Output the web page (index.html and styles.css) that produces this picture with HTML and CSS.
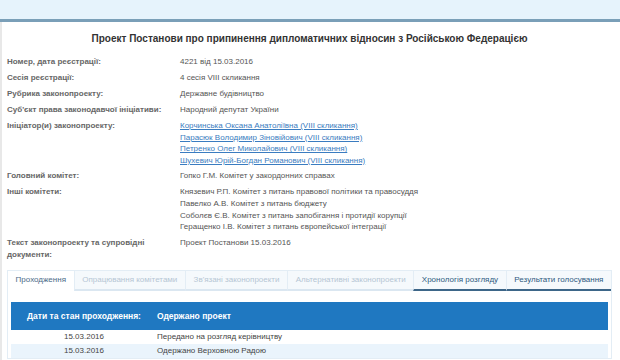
FILE: index.html
```html
<!DOCTYPE html>
<html lang="uk">
  <head>
    <meta charset="UTF-8" />
    <title>Проект Постанови</title>
    <link rel="stylesheet" href="styles.css">
  </head>
  <body>
    <div class="topbar"></div>
    <div class="page">
      <h1>Проект Постанови про припинення дипломатичних відносин з Російською Федерацією</h1>

      <div class="info">
        <div class="label">Номер, дата реєстрації:</div>
        <div class="value">4221 від 15.03.2016</div>

        <div class="label">Сесія реєстрації:</div>
        <div class="value">4 сесія VIII скликання</div>

        <div class="label">Рубрика законопроекту:</div>
        <div class="value">Державне будівництво</div>

        <div class="label">Суб'єкт права законодавчої ініціативи:</div>
        <div class="value">Народний депутат України</div>

        <div class="label">Ініціатор(и) законопроекту:</div>
        <div class="value lines">
          <a href="#">Корчинська Оксана Анатоліївна (VIII скликання)</a>
          <a href="#">Парасюк Володимир Зіновійович (VIII скликання)</a>
          <a href="#">Петренко Олег Миколайович (VIII скликання)</a>
          <a href="#">Шухевич Юрій-Богдан Романович (VIII скликання)</a>
        </div>

        <div class="label">Головний комітет:</div>
        <div class="value">Гопко Г.М. Комітет у закордонних справах</div>

        <div class="label">Інші комітети:</div>
        <div class="value lines">
          <span>Князевич Р.П. Комітет з питань правової політики та правосуддя</span>
          <span>Павелко А.В. Комітет з питань бюджету</span>
          <span>Соболєв Є.В. Комітет з питань запобігання і протидії корупції</span>
          <span>Геращенко І.В. Комітет з питань європейської інтеграції</span>
        </div>

        <div class="label">Текст законопроекту та супровідні документи:</div>
        <div class="value">Проект Постанови 15.03.2016</div>
      </div>

      <div class="tabs">
        <div class="tab active">Проходження</div>
        <div class="tab">Опрацювання комітетами</div>
        <div class="tab">Зв'язані законопроекти</div>
        <div class="tab">Альтернативні законопроекти</div>
        <div class="tab enabled">Хронологія розгляду</div>
        <div class="tab enabled">Результати голосування</div>
      </div>

      <div class="panel">
        <table class="flow">
          <thead>
            <tr>
              <th class="date-col">Дати та стан проходження:</th>
              <th>Одержано проект</th>
            </tr>
          </thead>
          <tbody>
            <tr>
              <td class="date-col">15.03.2016</td>
              <td>Передано на розгляд керівництву</td>
            </tr>
            <tr class="alt">
              <td class="date-col">15.03.2016</td>
              <td>Одержано Верховною Радою</td>
            </tr>
          </tbody>
        </table>
      </div>
    </div>
  </body>
</html>
```

FILE: styles.css
```css
body {
  font-family: "Liberation Sans", Arial, sans-serif;
  margin: 0;
  background: #ffffff;
  color: #444;
  font-size: 8px;
}
.topbar {
  height: 19px;
  background: #e6f3fc;
  border-bottom: 3px solid #7a9fb8;
}
.page {
  border-left: 2px solid #e8e8e8;
  padding: 0 8px 0 5px;
  min-height: 400px;
}
h1 {
  margin: 0;
  padding: 11px 0 12px;
  text-align: center;
  font-size: 10px;
  font-weight: bold;
  color: #333;
}
.info {
  display: grid;
  grid-template-columns: 173px 1fr;
  row-gap: 4px;
  line-height: 12px;
}
.label {
  font-weight: bold;
  color: #666;
  padding-right: 8px;
}
.label:last-of-type {
  line-height: 13px;
}
.value {
  color: #555;
}
.lines {
  display: flex;
  flex-direction: column;
  line-height: 11.6px;
}
.lines a {
  color: #3a7cc0;
}
.tabs {
  display: flex;
  margin-top: 9px;
  border: 1px solid #e3edf5;
  border-bottom: none;
  height: 20px;
}
.tab {
  display: flex;
  align-items: center;
  justify-content: center;
  flex: auto;
  padding: 0 6px;
  background: #f5f9fc;
  color: #b6c6d4;
  border-left: 1px solid #e3edf5;
  border-bottom: 2px solid #dbe7f1;
  white-space: nowrap;
}
.tab:first-child {
  border-left: none;
}
.tab.active {
  background: #fff;
  color: #4a6a88;
  border-bottom-color: #fff;
}
.tab.enabled {
  color: #2f5a80;
  border-bottom-color: #3d6688;
}
.panel {
  border: 1px solid #e3edf5;
  border-top: none;
  padding: 11px 3px 0;
}
.flow {
  width: 100%;
  border-collapse: collapse;
}
.flow th {
  background: #1f78c1;
  color: #fff;
  font-size: 8.5px;
  text-align: left;
  height: 28px;
  padding: 0;
}
.flow td {
  height: 14px;
  padding: 0;
  color: #444;
}
.flow .date-col {
  width: 146px;
  text-align: center;
}
.flow tr.alt td {
  background: #eaf4fc;
}
```
